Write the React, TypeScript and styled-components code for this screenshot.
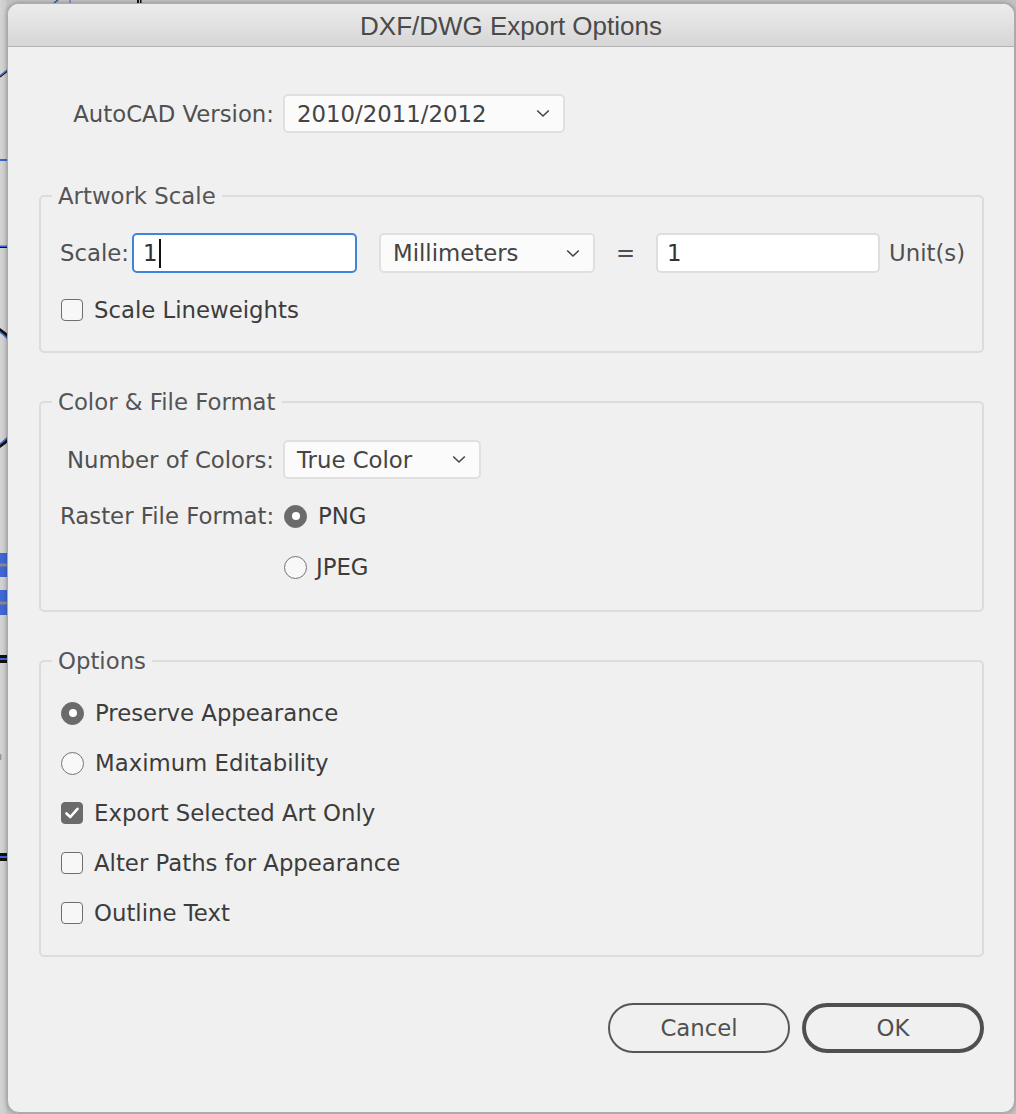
import React from "react";
import styled, { createGlobalStyle } from "styled-components";

const GlobalStyle = createGlobalStyle`
  html, body { margin: 0; padding: 0; }
  body {
    width: 1016px;
    height: 1114px;
    overflow: hidden;
    background: #d0d0d0;
    font-family: "DejaVu Sans", "Liberation Sans", sans-serif;
  }
  * { box-sizing: border-box; }
`;

const Stage = styled.div`
  position: relative;
  width: 1016px;
  height: 1114px;
  overflow: hidden;
  padding: 3px 2px 0 7px;
  background: linear-gradient(to right, #d4d4d4 0, #cbcbcb 6px, #c2c2c2 7px);
`;

const CanvasArt = styled.svg`
  position: absolute;
  left: 0;
  top: 0;
`;

const Dialog = styled.div`
  position: relative;
  width: 1008px;
  height: 1110px;
  display: flex;
  flex-direction: column;
  background: #f0f0f0;
  border: 1px solid #acacac;
  border-radius: 12px;
  overflow: hidden;
  box-shadow: 0 0 4px rgba(0, 0, 0, 0.3);
`;

const TitleBar = styled.div`
  height: 43px;
  flex: none;
  display: flex;
  align-items: center;
  justify-content: center;
  background: linear-gradient(to bottom, #ececec, #d6d6d6);
  border-bottom: 1px solid #b3b3b3;
`;

const Title = styled.div`
  font-family: "Liberation Sans", Arial, sans-serif;
  font-size: 26px;
  color: #4a4a4a;
  padding-top: 3px;
`;

const Body = styled.div`
  display: flex;
  flex-direction: column;
  padding: 47px 30px 0 31px;
  font-size: 22.8px;
  color: #4a4a4a;
`;

const TopRow = styled.div`
  display: flex;
  align-items: center;
  gap: 9px;
  height: 39px;
`;

const Label = styled.div<{ $width?: number }>`
  width: ${(p) => (p.$width ? `${p.$width}px` : "auto")};
  flex: none;
  text-align: right;
  color: #505050;
  white-space: nowrap;
`;

const Select = styled.div<{ $width: number; $height?: number }>`
  width: ${(p) => p.$width}px;
  height: ${(p) => p.$height ?? 39}px;
  flex: none;
  display: flex;
  align-items: center;
  justify-content: space-between;
  padding: 0 13px 0 12px;
  background: #fbfbfb;
  border: 2px solid #e0e0e0;
  border-radius: 5px;
  color: #444;
  white-space: nowrap;
`;

const Chevron = () => (
  <svg width="14" height="9" viewBox="0 0 14 9">
    <path d="M1.2 1.5 L7 7 L12.8 1.5" fill="none" stroke="#454545" strokeWidth="1.6" />
  </svg>
);

const Group = styled.fieldset<{ $top: number; $pt: number; $pb: number }>`
  margin: ${(p) => p.$top}px 0 0 0;
  padding: ${(p) => p.$pt}px 0 ${(p) => p.$pb}px 11px;
  min-width: 0;
  border: 2px solid #dcdcdc;
  border-radius: 5px;
`;

const Legend = styled.legend`
  padding: 0 6px;
  line-height: 28px;
  height: 28px;
  font-size: 22.8px;
  color: #555;
`;

const GroupContent = styled.div<{ $gap: number }>`
  display: flex;
  flex-direction: column;
  gap: ${(p) => p.$gap}px;
  padding-left: 8px;
`;

const ScaleRow = styled.div`
  display: flex;
  align-items: center;
  height: 40px;
`;

const TextField = styled.div<{ $width: number; $focused?: boolean }>`
  width: ${(p) => p.$width}px;
  height: 40px;
  flex: none;
  display: flex;
  align-items: center;
  padding-left: 9px;
  background: #fff;
  border: 2px solid ${(p) => (p.$focused ? "#3d84dc" : "#dedede")};
  border-radius: 5px;
  color: #333;
`;

const Caret = styled.span`
  display: inline-block;
  width: 2px;
  height: 29px;
  background: #111;
  margin-left: 1px;
`;

const Cell = styled.div<{ $width: number; $center?: boolean }>`
  width: ${(p) => p.$width}px;
  flex: none;
  text-align: ${(p) => (p.$center ? "center" : "left")};
  color: #505050;
`;

const UnitLabel = styled.div`
  margin-left: 9px;
  color: #505050;
`;

const CheckRow = styled.div<{ $gap?: number }>`
  display: flex;
  align-items: center;
  gap: ${(p) => p.$gap ?? 11}px;
  height: 28px;
  color: #3c3c3c;
`;

const Box = styled.span<{ $checked?: boolean }>`
  width: 22px;
  height: 22px;
  flex: none;
  margin-left: 1px;
  display: inline-flex;
  align-items: center;
  justify-content: center;
  border-radius: 4px;
  border: 1.5px solid ${(p) => (p.$checked ? "#6b6b6b" : "#6e6e6e")};
  background: ${(p) => (p.$checked ? "#6b6b6b" : "#f7f7f7")};
`;

const Radio = styled.span<{ $checked?: boolean }>`
  width: 23px;
  height: 23px;
  flex: none;
  margin-left: 1px;
  display: inline-flex;
  align-items: center;
  justify-content: center;
  border-radius: 50%;
  border: 1.5px solid ${(p) => (p.$checked ? "#6b6b6b" : "#747474")};
  background: ${(p) => (p.$checked ? "#6b6b6b" : "#f8f8f8")};
`;

const RadioDot = styled.span`
  width: 8px;
  height: 8px;
  border-radius: 50%;
  background: #fff;
`;

const FormatGrid = styled.div`
  display: grid;
  grid-template-columns: 214px 1fr;
  grid-template-rows: 39px 28px 28px;
  column-gap: 9px;
  row-gap: 23px;
  align-items: center;
`;

const ButtonBar = styled.div`
  display: flex;
  justify-content: flex-end;
  gap: 12px;
  margin-top: 46px;
`;

const PillButton = styled.button<{ $primary?: boolean }>`
  width: 182px;
  height: 50px;
  border-radius: 25px;
  border: ${(p) => (p.$primary ? "4px solid #4f4f4f" : "2px solid #555")};
  background: transparent;
  font-family: "DejaVu Sans", sans-serif;
  font-size: 22.8px;
  color: #505050;
  padding: 0;
`;

const Check = () => (
  <svg width="16" height="14" viewBox="0 0 16 14">
    <path d="M2.5 7.5 L6.3 11 L13.5 2.8" fill="none" stroke="#fff" strokeWidth="2.6" strokeLinecap="round" strokeLinejoin="round" />
  </svg>
);

const CheckItem = ({ label, checked }: { label: string; checked?: boolean }) => (
  <CheckRow>
    <Box $checked={checked}>{checked && <Check />}</Box>
    <span>{label}</span>
  </CheckRow>
);

const RadioItem = ({ label, checked, gap }: { label: string; checked?: boolean; gap?: number }) => (
  <CheckRow $gap={gap}>
    <Radio $checked={checked}>{checked && <RadioDot />}</Radio>
    <span>{label}</span>
  </CheckRow>
);

const Artwork = () => (
  <CanvasArt width="1016" height="1114" viewBox="0 0 1016 1114">
    <path d="M54 3 L58 0" stroke="#2a4fb0" strokeWidth="1.5" />
    <path d="M70 0 L70 3" stroke="#3a64d0" strokeWidth="1" />
    <rect x="137" y="0" width="2" height="3" fill="#111" />
    <rect x="140" y="0" width="1.5" height="3" fill="#111" />
    <path d="M0 77 L9 70" stroke="#111" strokeWidth="1.2" />
    <path d="M0 75.5 L9 68.5" stroke="#3a64d0" strokeWidth="1.2" />
    <rect x="0" y="159" width="9" height="2" fill="#3a64d0" />
    <rect x="0" y="245.5" width="9" height="1.5" fill="#3a64d0" />
    <rect x="0" y="247" width="9" height="1" fill="#111" />
    <circle cx="-39" cy="388" r="70" fill="none" stroke="#111" strokeWidth="3" />
    <circle cx="-39" cy="388" r="68" fill="none" stroke="#3a64d0" strokeWidth="1.5" />
    <rect x="0" y="553" width="9" height="24" fill="#3f66d4" />
    <rect x="0" y="563.5" width="9" height="3" fill="#8a8a8a" />
    <rect x="0" y="590" width="9" height="25" fill="#3f66d4" />
    <rect x="0" y="601.5" width="9" height="3" fill="#8a8a8a" />
    <rect x="0" y="655" width="9" height="3" fill="#111" />
    <rect x="0" y="658" width="9" height="2" fill="#3a64d0" />
    <rect x="0" y="660" width="9" height="3" fill="#111" />
    <rect x="0" y="853" width="9" height="3" fill="#111" />
    <rect x="0" y="856" width="9" height="2" fill="#3a64d0" />
    <rect x="0" y="858" width="9" height="3" fill="#111" />
    <rect x="0" y="754" width="1.5" height="6" fill="#999" />
  </CanvasArt>
);

export default function App() {
  return (
    <>
      <GlobalStyle />
      <Stage>
        <Artwork />
        <Dialog>
          <TitleBar>
            <Title>DXF/DWG Export Options</Title>
          </TitleBar>
          <Body>
            <TopRow>
              <Label $width={235}>AutoCAD Version:</Label>
              <Select $width={282}>
                <span>2010/2011/2012</span>
                <Chevron />
              </Select>
            </TopRow>

            <Group $top={49} $pt={23} $pb={27}>
              <Legend>Artwork Scale</Legend>
              <GroupContent $gap={23}>
                <ScaleRow>
                  <Cell $width={72}>Scale:</Cell>
                  <TextField $width={225} $focused>
                    1<Caret />
                  </TextField>
                  <Cell $width={22} />
                  <Select $width={216} $height={40}>
                    <span>Millimeters</span>
                    <Chevron />
                  </Select>
                  <Cell $width={61} $center>=</Cell>
                  <TextField $width={224}>1</TextField>
                  <UnitLabel>Unit(s)</UnitLabel>
                </ScaleRow>
                <CheckItem label="Scale Lineweights" />
              </GroupContent>
            </Group>

            <Group $top={35} $pt={24} $pb={29}>
              <Legend>Color &amp; File Format</Legend>
              <GroupContent $gap={0}>
                <FormatGrid>
                  <Label>Number of Colors:</Label>
                  <Select $width={198}>
                    <span>True Color</span>
                    <Chevron />
                  </Select>
                  <Label>Raster File Format:</Label>
                  <RadioItem label="PNG" checked />
                  <span />
                  <RadioItem label="JPEG" gap={9} />
                </FormatGrid>
              </GroupContent>
            </Group>

            <Group $top={35} $pt={24} $pb={28}>
              <Legend>Options</Legend>
              <GroupContent $gap={22}>
                <RadioItem label="Preserve Appearance" checked />
                <RadioItem label="Maximum Editability" />
                <CheckItem label="Export Selected Art Only" checked />
                <CheckItem label="Alter Paths for Appearance" />
                <CheckItem label="Outline Text" />
              </GroupContent>
            </Group>

            <ButtonBar>
              <PillButton>Cancel</PillButton>
              <PillButton $primary>OK</PillButton>
            </ButtonBar>
          </Body>
        </Dialog>
      </Stage>
    </>
  );
}
